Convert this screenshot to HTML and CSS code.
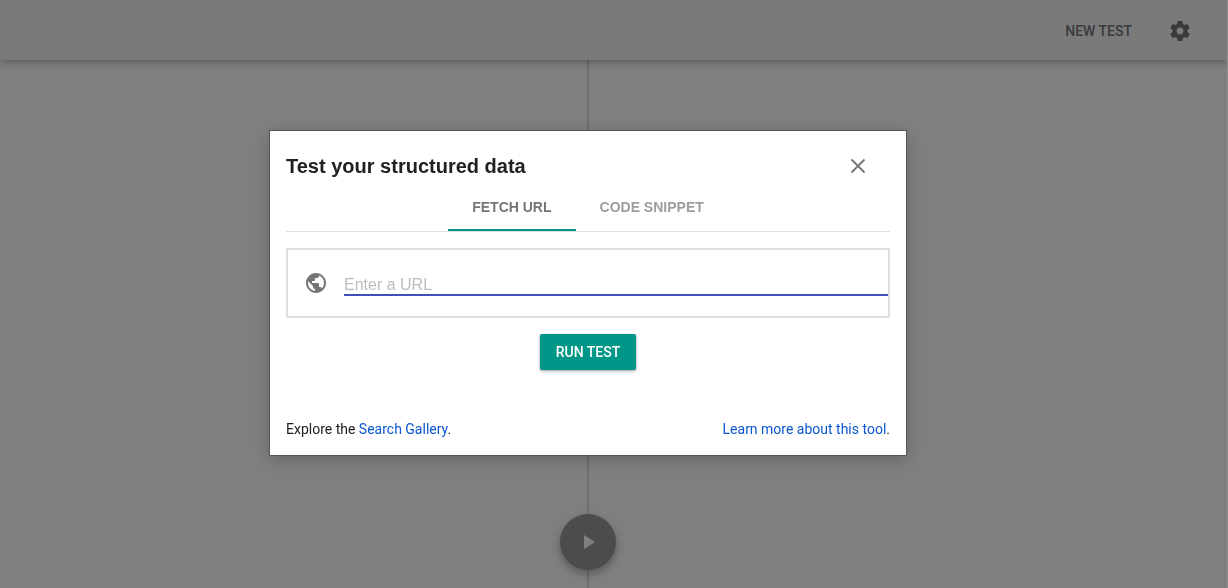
FILE: index.html
```html
<!DOCTYPE html>
<html lang="en">
<head>
    <meta charset="UTF-8">
    <meta name="viewport" content="width=device-width, initial-scale=1.0">
    <title>Structured Data Testing Tool</title>

    <link rel="stylesheet" href="styles.css">
</head>
<body>

    <div class="app">
        <header class="topbar">
            <button class="new-test" type="button">New test</button>
            <button class="icon-button" type="button" aria-label="Settings">
                <svg width="24" height="24" viewBox="0 0 24 24" fill="currentColor"><path d="M19.43 12.98c.04-.32.07-.64.07-.98s-.03-.66-.07-.98l2.11-1.65c.19-.15.24-.42.12-.64l-2-3.46c-.12-.22-.39-.3-.61-.22l-2.49 1c-.52-.4-1.08-.73-1.69-.98l-.38-2.65C14.46 2.18 14.25 2 14 2h-4c-.25 0-.46.18-.49.42l-.38 2.65c-.61.25-1.17.59-1.69.98l-2.49-1c-.23-.09-.49 0-.61.22l-2 3.46c-.13.22-.07.49.12.64l2.11 1.65c-.04.32-.07.65-.07.98s.03.66.07.98l-2.11 1.65c-.19.15-.24.42-.12.64l2 3.46c.12.22.39.3.61.22l2.49-1c.52.4 1.08.73 1.69.98l.38 2.65c.03.24.24.42.49.42h4c.25 0 .46-.18.49-.42l.38-2.65c.61-.25 1.17-.59 1.69-.98l2.49 1c.23.09.49 0 .61-.22l2-3.46c.12-.22.07-.49-.12-.64l-2.11-1.65zM12 15.5c-1.93 0-3.5-1.57-3.5-3.5s1.57-3.5 3.5-3.5 3.5 1.57 3.5 3.5-1.57 3.5-3.5 3.5z"/></svg>
            </button>
        </header>

        <main class="workspace">
            <section class="pane pane-code"></section>
            <section class="pane pane-results"></section>
            <button class="play-button" type="button" aria-label="Run">
                <svg width="24" height="24" viewBox="0 0 24 24" fill="currentColor"><path d="M8 5v14l11-7z"/></svg>
            </button>
        </main>
    </div>

    <div class="backdrop">
        <div class="dialog" role="dialog" aria-labelledby="dialogTitle">
            <div class="dialog-header">
                <h1 id="dialogTitle">Test your structured data</h1>
                <button class="close-button" type="button" aria-label="Close">
                    <svg width="24" height="24" viewBox="0 0 24 24" fill="none" stroke="currentColor" stroke-width="1.8"><path d="M5.500 5.500l13 13M18.500 5.500l-13 13"/></svg>
                </button>
            </div>

            <div class="tabs" role="tablist">
                <button class="tab active" type="button" role="tab" aria-selected="true">Fetch URL</button>
                <button class="tab" type="button" role="tab" aria-selected="false">Code snippet</button>
            </div>

            <form class="url-form">
                <div class="url-box">
                    <label for="url" aria-label="URL">
                        <svg width="24" height="24" viewBox="0 0 24 24" fill="currentColor"><path d="M12 2C6.480 2 2 6.480 2 12s4.480 10 10 10 10-4.480 10-10S17.520 2 12 2zm-1 17.930c-3.950-.49-7-3.850-7-7.930 0-.62.08-1.210.21-1.790L9 15v1c0 1.100.9 2 2 2v1.930zm6.900-2.540c-.26-.81-1-1.390-1.900-1.390h-1v-3c0-.55-.45-1-1-1H8v-2h2c.55 0 1-.45 1-1V7h2c1.100 0 2-.9 2-2v-.41c2.930 1.190 5 4.060 5 7.410 0 2.080-.8 3.970-2.100 5.390z"/></svg>
                    </label>
                    <input id="url" type="text" placeholder="Enter a URL">
                </div>
                <button class="run-button" type="submit">Run test</button>
            </form>

            <footer class="dialog-footer">
                <span>Explore the <a href="#">Search Gallery</a>.</span>
                <span><a href="#">Learn more about this tool</a>.</span>
            </footer>
        </div>
    </div>

</body>
</html>
```
FILE: styles.css
```css
* {
    box-sizing: border-box;
}

body {
    margin: 0;
    font-family: Roboto, sans-serif;
    font-size: 14px;
    color: #212121;
    overflow: hidden;
}

button {
    border: none;
    background: none;
    padding: 0;
    font-family: inherit;
    cursor: pointer;
}

svg {
    display: block;
}

.app {
    display: flex;
    flex-direction: column;
    height: 100vh;
    background-color: #fff;
}

/* --- Top bar --- */
.topbar {
    display: flex;
    justify-content: flex-end;
    align-items: center;
    gap: 36px;
    height: 60px;
    padding: 2px 36px 0 0;
    background-color: #f5f5f5;
    box-shadow: 0 2px 8px rgba(0, 0, 0, 0.3);
    z-index: 1;
}

.new-test {
    font-size: 14px;
    font-weight: 500;
    text-transform: uppercase;
    color: #757575;
}

.icon-button {
    color: #757575;
}

/* --- Code / results split, 52px toolbar on the right --- */
.workspace {
    position: relative;
    display: flex;
    flex: 1;
    margin-right: 52px;
}

.pane {
    flex: 1;
}

.pane-code {
    border-right: 1px solid #dcdcdc;
}

.pane-results {
    border-left: 1px solid #dcdcdc;
}

.play-button {
    position: absolute;
    left: 50%;
    bottom: 18px;
    transform: translateX(-50%);
    display: flex;
    justify-content: center;
    align-items: center;
    width: 56px;
    height: 56px;
    border-radius: 50%;
    background-color: #999;
    color: #fff;
    box-shadow: 0 4px 10px rgba(0, 0, 0, 0.3);
}

/* --- Dialog --- */
.backdrop {
    position: fixed;
    top: 0;
    left: 0;
    width: 100%;
    height: 100%;
    display: flex;
    justify-content: center;
    align-items: center;
    padding: 0 51px 2px 0;
    border-right: 1px solid #8c8c8c;
    background-color: rgba(0, 0, 0, 0.5);
    z-index: 10;
}

.dialog {
    width: 638px;
    max-width: 100%;
    padding: 16px;
    border: 1px solid #555;
    background-color: #fff;
    box-shadow: 0 4px 16px rgba(0, 0, 0, 0.2);
}

.dialog-header {
    display: flex;
    justify-content: space-between;
    align-items: center;
    height: 38px;
    padding-right: 20px;
}

.dialog-header h1 {
    margin: 0;
    font-family: "Liberation Sans", Arial, sans-serif;
    font-size: 20px;
    font-weight: bold;
}

.close-button {
    color: #757575;
}

.tabs {
    display: flex;
    justify-content: center;
    height: 47px;
    border-bottom: 1px solid #e0e0e0;
}

.tab {
    padding: 0 24px;
    border-bottom: 2px solid transparent;
    font-family: "Liberation Sans", Arial, sans-serif;
    font-size: 14px;
    font-weight: bold;
    text-transform: uppercase;
    color: #9e9e9e;
}

.tab.active {
    color: #757575;
    border-bottom-color: #009688;
}

.url-form {
    display: flex;
    flex-direction: column;
    align-items: center;
    gap: 16px;
    padding-top: 16px;
}

.url-box {
    display: flex;
    align-items: center;
    gap: 16px;
    width: 100%;
    height: 70px;
    padding-left: 16px;
    border: 2px solid #e0e0e0;
}

.url-box label {
    color: #757575;
}

.url-box input {
    flex: 1;
    min-width: 0;
    height: 26px;
    padding: 6px 0 0;
    border: none;
    border-bottom: 2px solid #3f51b5;
    outline: none;
    font-family: "Liberation Sans", Arial, sans-serif;
    font-size: 16px;
}

.url-box input::placeholder {
    color: #bdbdbd;
}

.run-button {
    height: 36px;
    padding: 0 16px;
    border-radius: 2px;
    background-color: #009688;
    color: #fff;
    font-size: 14px;
    font-weight: 500;
    text-transform: uppercase;
    box-shadow: 0 1px 3px rgba(0, 0, 0, 0.4);
}

.dialog-footer {
    display: flex;
    justify-content: space-between;
    padding-top: 49px;
    line-height: 20px;
}

.dialog-footer a {
    color: #0b57d0;
    text-decoration: none;
}
```
